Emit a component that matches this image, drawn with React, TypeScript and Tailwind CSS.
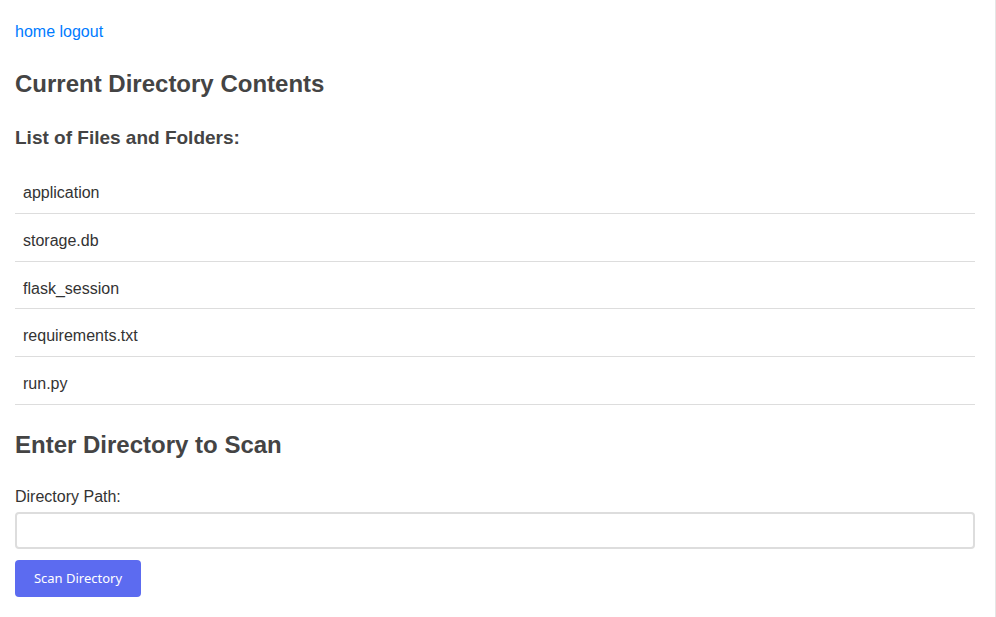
import { useState } from 'react'

const files = ['application', 'storage.db', 'flask_session', 'requirements.txt', 'run.py']

function App() {
  const [path, setPath] = useState('')

  return (
    <div className="min-h-screen w-[996px] bg-white border-r border-[#e5e5e5] font-['Liberation_Sans',Arial,sans-serif] text-[#444]">
      <div className="px-[15px] pt-[23px] w-[990px]">
        {/* Nav */}
        <div className="text-base leading-[18px] text-[#007bff]">
          <a href="#">home</a> <a href="#">logout</a>
        </div>

        <h2 className="mt-[28px] text-[24px] leading-[29px] font-bold text-[#444]">Current Directory Contents</h2>
        <h3 className="mt-[28px] text-[19px] leading-[23px] font-bold text-[#444]">List of Files and Folders:</h3>

        {/* Files list */}
        <ul className="mt-[17px] w-[960px]">
          {files.map((f) => (
            <li key={f} className="px-2 pt-[16px] pb-[8px] leading-[22.75px] text-base text-[#333] border-b border-[#ddd]">
              {f}
            </li>
          ))}
        </ul>

        <h2 className="mt-[25px] text-[24px] leading-[29px] font-bold text-[#444]">Enter Directory to Scan</h2>

        <form className="mt-[29px] w-[960px]" onSubmit={(e) => e.preventDefault()}>
          <label className="block text-base leading-[18px] text-[#333]">Directory Path:</label>
          <input
            value={path}
            onChange={(e) => setPath(e.target.value)}
            className="mt-[6px] block w-full h-[37px] border-2 border-[#ddd] rounded-[4px] px-2 outline-none"
          />
          <button
            type="submit"
            className="mt-[11px] h-[37px] w-[126px] rounded-[4px] bg-[#5c6bf0] text-white text-[13px] font-['Noto_Sans',sans-serif]"
          >
            Scan Directory
          </button>
        </form>
      </div>
    </div>
  )
}

export default App
